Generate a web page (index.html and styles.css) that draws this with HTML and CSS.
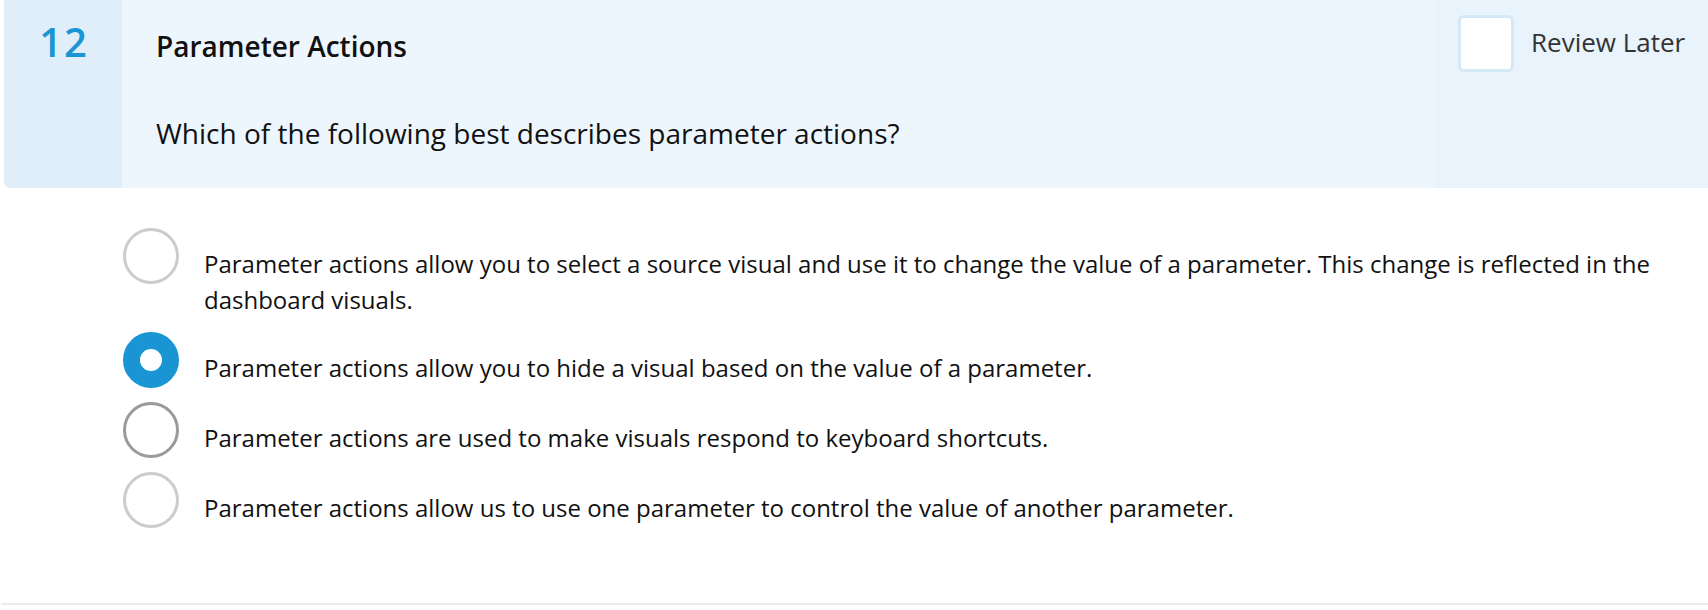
FILE: index.html
```html
<!DOCTYPE html>
<html lang="en">
<head>
<meta charset="utf-8">
<title>Question 12</title>
<link rel="stylesheet" href="styles.css">
</head>
<body>
<div class="question">
  <div class="q-header">
    <div class="q-number">12</div>
    <div class="q-main">
      <div class="q-title">Parameter Actions</div>
      <div class="q-text">Which of the following best describes parameter actions?</div>
    </div>
    <div class="q-review">
      <span class="checkbox"></span>
      <span class="review-label">Review Later</span>
    </div>
  </div>
  <div class="options">
    <div class="option">
      <span class="radio"></span>
      <span class="opt-text">Parameter actions allow you to select a source visual and use it to change the value of a parameter. This change is reflected in the dashboard visuals.</span>
    </div>
    <div class="option">
      <span class="radio checked"></span>
      <span class="opt-text">Parameter actions allow you to hide a visual based on the value of a parameter.</span>
    </div>
    <div class="option">
      <span class="radio hover"></span>
      <span class="opt-text">Parameter actions are used to make visuals respond to keyboard shortcuts.</span>
    </div>
    <div class="option">
      <span class="radio"></span>
      <span class="opt-text">Parameter actions allow us to use one parameter to control the value of another parameter.</span>
    </div>
  </div>
  <div class="divider"></div>
</div>
</body>
</html>
```
FILE: styles.css
```css
html, body {
  margin: 0;
  padding: 0;
  background: #ffffff;
}
body {
  font-family: "Open Sans", "Noto Sans", sans-serif;
  color: #111;
}
.question {
  width: 1708px;
}
.q-header {
  display: flex;
  height: 188px;
  margin-left: 4px;
  border-radius: 0 0 0 6px;
  overflow: hidden;
}
.q-number {
  width: 118px;
  flex: none;
  background: #dfeef8;
  color: #1a96d4;
  font-size: 40px;
  font-weight: 600;
  letter-spacing: 2px;
  line-height: 1;
  text-align: center;
  padding: 22px 0 0 2px;
  box-sizing: border-box;
}
.q-main {
  flex: 1;
  background: #eef6fd;
  padding: 28px 0 0 34px;
}
.q-title {
  font-size: 28px;
  font-weight: 600;
  line-height: 36px;
  color: #111;
}
.q-text {
  margin-top: 51px;
  font-size: 28px;
  line-height: 36px;
  color: #111;
}
.q-review {
  width: 272px;
  flex: none;
  background: #e8f3fb;
  display: flex;
  align-items: flex-start;
  padding: 15px 0 0 22px;
  box-sizing: border-box;
}
.checkbox {
  width: 56px;
  height: 57px;
  box-sizing: border-box;
  border: 3px solid #d3e9f7;
  border-radius: 6px;
  background: #fff;
  flex: none;
}
.review-label {
  margin-left: 17px;
  margin-top: 10px;
  font-size: 26px;
  line-height: 34px;
  color: #333;
}
.options {
  padding: 40px 0 0 123px;
  display: flex;
  flex-direction: column;
  gap: 14px;
}
.option {
  display: flex;
  align-items: flex-start;
}
.radio {
  width: 56px;
  height: 56px;
  border-radius: 50%;
  border: 3px solid #cccccc;
  box-sizing: border-box;
  flex: none;
  background: #fff;
}
.radio.hover {
  border-color: #9a9a9a;
}
.radio.checked {
  border: 17px solid #1a95d3;
  background: #fff;
}
.opt-text {
  margin-left: 25px;
  margin-top: 18px;
  font-size: 24px;
  line-height: 36px;
  color: #111;
  max-width: 1470px;
}
.divider {
  margin-top: 75px;
  margin-left: 1px;
  height: 2px;
  background: #ececec;
}
```
